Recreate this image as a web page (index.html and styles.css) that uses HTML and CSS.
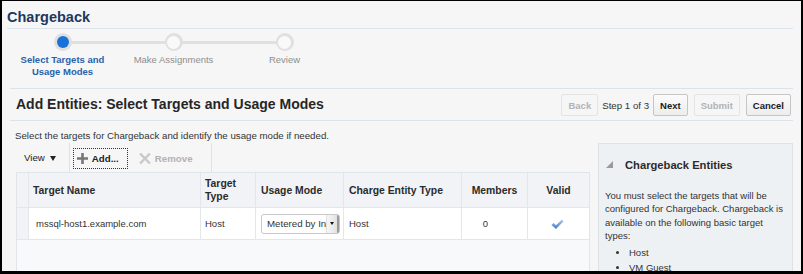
FILE: index.html
```html
<!DOCTYPE html>
<html lang="en">
  <head>
    <meta charset="UTF-8" />
    <title>Chargeback</title>
    <link rel="stylesheet" href="styles.css">
  </head>
  <body>
    <div class="frame">
      <!-- Page title -->
      <header class="page-head">
        <h1>Chargeback</h1>
      </header>

      <!-- Wizard train -->
      <div class="train">
        <div class="step active">
          <span class="dot"></span>
          <span class="label">Select Targets and<br />Usage Modes</span>
        </div>
        <div class="step">
          <span class="dot"></span>
          <span class="label">Make Assignments</span>
        </div>
        <div class="step">
          <span class="dot"></span>
          <span class="label">Review</span>
        </div>
      </div>

      <section class="main">
        <div class="main-head">
          <h2>Add Entities: Select Targets and Usage Modes</h2>
          <div class="nav">
            <button class="btn" disabled>Back</button>
            <span class="step-count">Step 1 of 3</span>
            <button class="btn btn-next">Next</button>
            <button class="btn btn-submit" disabled>Submit</button>
            <button class="btn">Cancel</button>
          </div>
        </div>

        <p class="intro">Select the targets for Chargeback and identify the usage mode if needed.</p>

        <div class="content">
          <div class="grid-area">
            <!-- Table toolbar -->
            <div class="toolbar">
              <div class="tb-view">View <span class="caret"></span></div>
              <span class="tb-sep"></span>
              <button class="tb-add">
                <svg width="11" height="11" viewBox="0 0 11 11"><path d="M4.2 0h2.6v4.2H11v2.6H6.8V11H4.2V6.8H0V4.2h4.2z" fill="#777"/></svg>
                Add...
              </button>
              <button class="tb-remove" disabled>
                <svg width="12" height="11" viewBox="0 0 12 11"><path d="M1 0.5L11 10.5M11 0.5L1 10.5" stroke="#c9c9c9" stroke-width="2.4"/></svg>
                Remove
              </button>
              <span class="tb-sep"></span>
            </div>

            <!-- Targets table -->
            <div class="table-wrap">
              <table class="targets">
                <colgroup>
                  <col class="c-sel" />
                  <col class="c-name" />
                  <col class="c-type" />
                  <col class="c-mode" />
                  <col class="c-charge" />
                  <col class="c-members" />
                  <col class="c-valid" />
                </colgroup>
                <thead>
                  <tr>
                    <th class="sel"></th>
                    <th>Target Name</th>
                    <th>Target Type</th>
                    <th class="pad">Usage Mode</th>
                    <th class="pad">Charge Entity Type</th>
                    <th class="center">Members</th>
                    <th class="center">Valid</th>
                  </tr>
                </thead>
                <tbody>
                  <tr>
                    <td class="sel"></td>
                    <td class="name">mssql-host1.example.com</td>
                    <td>Host</td>
                    <td class="pad">
                      <div class="select">
                        <span class="select-text">Metered by In</span>
                        <span class="select-arrow"></span>
                      </div>
                    </td>
                    <td class="pad">Host</td>
                    <td class="members">0</td>
                    <td class="center">
                      <svg class="check" width="13" height="11" viewBox="0 0 12 10">
                        <defs>
                          <linearGradient id="chk" x1="0" y1="0" x2="0" y2="1">
                            <stop offset="0" stop-color="#a6c8f2" />
                            <stop offset="1" stop-color="#4079c9" />
                          </linearGradient>
                        </defs>
                        <path d="M0.4 5.4L2.4 3.7L4.6 5.8L10 0.5L11.6 2L4.6 9.2Z" fill="url(#chk)" />
                      </svg>
                    </td>
                  </tr>
                </tbody>
              </table>
            </div>
          </div>

          <!-- Help panel -->
          <aside class="help">
            <h3>
              <svg class="tri" width="7" height="7" viewBox="0 0 7 7"><path d="M7 0V7H0Z" fill="#999"/></svg>
              Chargeback Entities
            </h3>
            <p>You must select the targets that will be configured for Chargeback. Chargeback is available on the following basic target types:</p>
            <ul>
              <li>Host</li>
              <li>VM Guest</li>
            </ul>
          </aside>
        </div>
      </section>
    </div>
  </body>
</html>
```

FILE: styles.css
```css
/* Page frame */
body {
  margin: 0;
  background-color: #000000;
  font-family: "Liberation Sans", Arial, sans-serif;
  color: #333333;
}

.frame {
  margin: 1px 2px 0 2px;
  height: 270px;
  background-color: #f6f6f6;
  overflow: hidden;
}

/* Title */
.page-head {
  margin: 0 8px 0 5px;
  padding: 7px 0 2px;
  border-bottom: 1px solid #dde3ea;
}

h1 {
  margin: 0;
  font-size: 14.5px;
  line-height: 18px;
  color: #1c3860;
}

/* Wizard train */
.train {
  display: flex;
  padding: 4px 0 10px 5px;
}

.step {
  width: 111px;
  display: flex;
  flex-direction: column;
  align-items: center;
  position: relative;
}

.step:not(:last-child)::after {
  content: "";
  position: absolute;
  top: 7.5px;
  left: 50%;
  width: 100%;
  height: 3px;
  background-color: #e0e0e0;
}

.dot {
  width: 18px;
  height: 18px;
  border-radius: 50%;
  background-color: #e0e0e0;
  display: flex;
  align-items: center;
  justify-content: center;
  position: relative;
  z-index: 1;
}

.dot::before {
  content: "";
  width: 13px;
  height: 13px;
  border-radius: 50%;
  background-color: #f9f9f9;
}

.step.active .dot::before {
  width: 12px;
  height: 12px;
  background-color: #1a72d6;
}

.label {
  margin-top: 3px;
  font-size: 9.5px;
  line-height: 12px;
  color: #8e8e8e;
  text-align: center;
}

.step.active .label {
  color: #2762ac;
  font-weight: bold;
}

/* Main section */
.main {
  margin: 0 8px;
  border-top: 1px solid #dce2e9;
}

.main-head {
  height: 31px;
  display: flex;
  align-items: center;
  justify-content: space-between;
  padding: 0 2px 0 6px;
  border-bottom: 1px solid #dce2e9;
}

h2 {
  margin: 0 0 2px;
  font-size: 14px;
  color: #262626;
}

.nav {
  display: flex;
  align-items: center;
  padding-top: 1px;
}

.btn {
  height: 22px;
  padding: 0 6px;
  font-family: inherit;
  font-size: 9.5px;
  font-weight: bold;
  color: #1b1b1b;
  border: 1px solid #c6c6c6;
  border-radius: 2px;
  background: linear-gradient(#fbfbfb, #ededed);
}

.btn:disabled {
  color: #b3b3b3;
  border-color: #e4e4e4;
  background: #f6f6f6;
}

.step-count {
  margin: 0 4px;
  font-size: 9.7px;
  color: #333333;
}

.btn-next,
.btn-submit {
  margin-right: 6px;
}

.intro {
  margin: 9px 0 0 5px;
  font-size: 9.7px;
  line-height: 12px;
  color: #333333;
}

.content {
  display: flex;
  gap: 8px;
  margin-top: 1px;
  padding-left: 6px;
}

.grid-area {
  width: 574px;
}

/* Toolbar */
.toolbar {
  height: 29px;
  display: flex;
  align-items: stretch;
  font-size: 9.7px;
}

.tb-view {
  display: flex;
  align-items: center;
  padding: 0 13px 0 8px;
  color: #222222;
}

.caret {
  width: 0;
  height: 0;
  margin: 1px 0 0 5px;
  border-left: 3.5px solid transparent;
  border-right: 3.5px solid transparent;
  border-top: 5px solid #222222;
}

.tb-sep {
  width: 1px;
  background-color: #e2e2e2;
}

.tb-add,
.tb-remove {
  display: flex;
  align-items: center;
  gap: 4px;
  font-family: inherit;
  font-size: 9.7px;
  font-weight: bold;
  background: none;
  border: 1px solid transparent;
  padding: 0 5px 0 3px;
}

.tb-add {
  margin: 5px 0 3px 3px;
  border: 1px dotted #333333;
  color: #222222;
  width: 55px;
}

.tb-remove {
  margin: 5px 12px 3px 7px;
  color: #b2b2b2;
}

/* Table */
.table-wrap {
  border: 1px solid #e1e5ea;
  background-color: #f7f9fb;
  height: 120px;
}

.targets {
  width: 572px;
  table-layout: fixed;
  border-collapse: separate;
  border-spacing: 0;
}

.c-sel { width: 12px; }
.c-name { width: 172px; }
.c-type { width: 55px; }
.c-mode { width: 88px; }
.c-charge { width: 118px; }
.c-members { width: 66px; }
.c-valid { width: 61px; }

.targets th,
.targets td {
  border-right: 1px solid #e3e7ec;
  border-bottom: 1px solid #e3e7ec;
  padding: 0 4px;
  text-align: left;
  vertical-align: middle;
}

.targets th:last-child,
.targets td:last-child {
  border-right: none;
}

.targets th {
  height: 34px;
  background-color: #f1f3f6;
  font-size: 10.4px;
  line-height: 13px;
  color: #2b2b2b;
}

.targets td {
  height: 31px;
  background-color: #ffffff;
  font-size: 9.5px;
  color: #333333;
}

.targets .sel {
  padding: 0;
  background-color: #f1f3f6;
}

.targets .pad {
  padding-left: 5px;
}

.targets .name {
  padding-left: 7px;
}

.targets .center {
  text-align: center;
}

.targets .members {
  text-align: center;
  padding-right: 22px;
}

.check {
  display: block;
  margin: 1px auto 0;
  position: relative;
  left: -1px;
}

.select {
  display: flex;
  width: 79px;
  height: 20px;
  box-sizing: border-box;
  border: 1px solid #c9c9c9;
  border-radius: 3px;
  background-color: #ffffff;
  overflow: hidden;
}

.select-text {
  flex: 1;
  padding-left: 5px;
  font-size: 9.7px;
  line-height: 18px;
  white-space: nowrap;
  color: #333333;
}

.select-arrow {
  width: 11px;
  display: flex;
  align-items: center;
  justify-content: center;
  background: linear-gradient(to right, #f6f6f6, #e2e2e2);
  border-left: 1px solid #e0e0e0;
  border-right: 2px solid #9a9a9a;
}

.select-arrow::before {
  content: "";
  border-left: 2.5px solid transparent;
  border-right: 2.5px solid transparent;
  border-top: 3px solid #111111;
}

/* Help panel */
.help {
  width: 195px;
  height: 140px;
  box-sizing: border-box;
  padding: 14px 6px 0 6px;
  background-color: #eef1f4;
  border: 1px solid #dde2e7;
}

.help h3 {
  margin: 0;
  display: flex;
  align-items: center;
  gap: 12px;
  font-size: 11.2px;
  line-height: 14px;
  color: #2b2b2b;
}

.tri {
  flex-shrink: 0;
  margin: 0 0 1px 1px;
}

.help p {
  margin: 17px 0 0;
  font-size: 9.5px;
  line-height: 13.4px;
  color: #333333;
}

.help ul {
  margin: 2px 0 0;
  padding-left: 24px;
  font-size: 9.5px;
  line-height: 15px;
}
```
